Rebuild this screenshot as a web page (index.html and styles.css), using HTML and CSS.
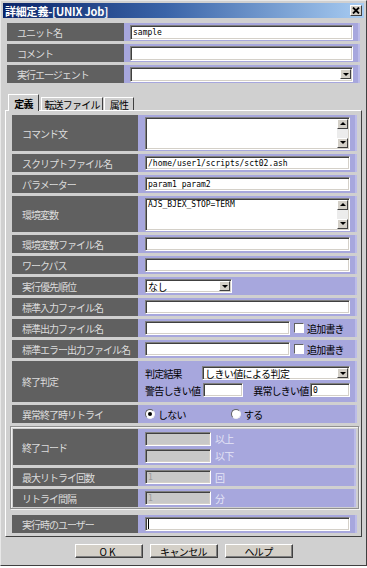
FILE: index.html
```html
<!DOCTYPE html>
<html lang="ja">
<head>
  <meta charset="UTF-8" />
  <title>詳細定義-[UNIX Job]</title>
  <link rel="stylesheet" href="styles.css">
</head>
<body>
  <div class="window">
    <div class="titlebar">
      <span class="title">詳細定義-[UNIX Job]</span>
      <span class="close">
        <svg width="8" height="7" viewBox="0 0 8 7"><path d="M1 0.5 L7 6.5 M7 0.5 L1 6.5" stroke="#000" stroke-width="1.8"/></svg>
      </span>
    </div>

    <div class="top">
      <div class="row">
        <div class="label">ユニット名</div>
        <div class="field"><div class="input"><span class="val">sample</span></div></div>
      </div>
      <div class="row">
        <div class="label">コメント</div>
        <div class="field"><div class="input"></div></div>
      </div>
      <div class="row">
        <div class="label">実行エージェント</div>
        <div class="field">
          <div class="select wide"><span class="sel-text"></span><span class="drop"><span class="tri"></span></span></div>
        </div>
      </div>
    </div>

    <div class="tabs">
      <div class="tab active">定義</div>
      <div class="tab t2">転送ファイル</div>
      <div class="tab t3">属性</div>
    </div>

    <div class="panel">
      <div class="row tall">
        <div class="label">コマンド文</div>
        <div class="field">
          <div class="textarea">
            <span class="ta-text"></span>
            <span class="vscroll">
              <span class="sbtn"><span class="tri up"></span></span>
              <span class="sbtn"><span class="tri"></span></span>
            </span>
          </div>
        </div>
      </div>
      <div class="row">
        <div class="label">スクリプトファイル名</div>
        <div class="field"><div class="input"><span class="val">/home/user1/scripts/sct02.ash</span></div></div>
      </div>
      <div class="row">
        <div class="label">パラメーター</div>
        <div class="field"><div class="input"><span class="val">param1 param2</span></div></div>
      </div>
      <div class="row tall">
        <div class="label">環境変数</div>
        <div class="field">
          <div class="textarea">
            <span class="ta-text val">AJS_BJEX_STOP=TERM</span>
            <span class="vscroll">
              <span class="sbtn"><span class="tri up"></span></span>
              <span class="sbtn"><span class="tri"></span></span>
            </span>
          </div>
        </div>
      </div>
      <div class="row">
        <div class="label">環境変数ファイル名</div>
        <div class="field"><div class="input"></div></div>
      </div>
      <div class="row">
        <div class="label">ワークパス</div>
        <div class="field"><div class="input"></div></div>
      </div>
      <div class="row">
        <div class="label">実行優先順位</div>
        <div class="field">
          <div class="select prio"><span class="sel-text">なし</span><span class="drop"><span class="tri"></span></span></div>
        </div>
      </div>
      <div class="row">
        <div class="label">標準入力ファイル名</div>
        <div class="field"><div class="input"></div></div>
      </div>
      <div class="row">
        <div class="label">標準出力ファイル名</div>
        <div class="field">
          <div class="input short"></div>
          <span class="check"></span><span class="text">追加書き</span>
        </div>
      </div>
      <div class="row">
        <div class="label">標準エラー出力ファイル名</div>
        <div class="field">
          <div class="input short"></div>
          <span class="check"></span><span class="text">追加書き</span>
        </div>
      </div>
      <div class="row judge">
        <div class="label">終了判定</div>
        <div class="field col">
          <div class="line">
            <span class="text">判定結果</span>
            <div class="select judge-sel"><span class="sel-text">しきい値による判定</span><span class="drop"><span class="tri"></span></span></div>
          </div>
          <div class="line">
            <span class="text">警告しきい値</span>
            <div class="input num warn"></div>
            <span class="text err-label">異常しきい値</span>
            <div class="input num err"><span class="val">0</span></div>
          </div>
        </div>
      </div>
      <div class="row">
        <div class="label">異常終了時リトライ</div>
        <div class="field">
          <span class="radio-item first"><span class="radio on"></span><span class="text">しない</span></span>
          <span class="radio-item"><span class="radio"></span><span class="text">する</span></span>
        </div>
      </div>

      <div class="group">
        <div class="row tall">
          <div class="label">終了コード</div>
          <div class="field col">
            <div class="line"><div class="input off"></div><span class="text dim">以上</span></div>
            <div class="line"><div class="input off"></div><span class="text dim">以下</span></div>
          </div>
        </div>
        <div class="row">
          <div class="label">最大リトライ回数</div>
          <div class="field"><div class="input off"><span class="val">1</span></div><span class="text dim">回</span></div>
        </div>
        <div class="row">
          <div class="label">リトライ間隔</div>
          <div class="field"><div class="input off"><span class="val">1</span></div><span class="text dim">分</span></div>
        </div>
      </div>

      <div class="row">
        <div class="label">実行時のユーザー</div>
        <div class="field"><div class="input"><span class="caret"></span></div></div>
      </div>
    </div>

    <div class="buttons">
      <div class="btn ok">OK</div>
      <div class="btn">キャンセル</div>
      <div class="btn">ヘルプ</div>
    </div>
  </div>
</body>
</html>
```

FILE: styles.css
```css
body {
  margin: 0;
  background: #ffffff;
  font-family: "Noto Sans CJK JP", "Liberation Sans", sans-serif;
  font-size: 10px;
}

.window {
  width: 367px;
  height: 566px;
  box-sizing: border-box;
  border: 1px solid;
  border-color: #e8e8e8 #404040 #404040 #e8e8e8;
  background: #d0d0d0;
  padding: 2px;
}

.titlebar {
  height: 15px;
  background: linear-gradient(to right, #0a2468, #3a64a8 45%, #a8ccf2);
  display: flex;
  align-items: center;
  justify-content: space-between;
  padding: 0 2px 0 2px;
}

.title {
  color: #ffffff;
  font-weight: bold;
  font-size: 11px;
  letter-spacing: -0.2px;
}

.close {
  width: 12px;
  height: 11px;
  box-sizing: border-box;
  background: #d4d0c8;
  border: 1px solid;
  border-color: #ffffff #404040 #404040 #ffffff;
  display: flex;
  align-items: center;
  justify-content: center;
}

/* rows */
.top {
  margin: 5px 4px 0;
  display: flex;
  flex-direction: column;
  gap: 3px;
}

.row {
  display: flex;
  height: 18px;
}

.row.tall {
  height: 36px;
}

.row.judge {
  height: 41px;
}

.label {
  background: #606060;
  color: #dcdcdc;
  display: flex;
  align-items: center;
  padding-left: 10px;
  box-sizing: border-box;
  letter-spacing: -1px;
  white-space: nowrap;
  flex-shrink: 0;
}

.top .label {
  width: 117px;
}

.panel .label {
  width: 126px;
}

.group .label {
  width: 125px;
  padding-left: 9px;
}

.field {
  flex: 1;
  background: #a7a7dd;
  border-right: 2px solid #bcbce8;
  display: flex;
  align-items: center;
  padding: 0 5px 0 6px;
  min-width: 0;
}

.panel .field {
  padding: 0 5px 0 7px;
}

.field.col {
  flex-direction: column;
  align-items: stretch;
  justify-content: center;
  gap: 3px;
}

.line {
  display: flex;
  align-items: center;
  height: 14px;
}

.text {
  color: #000000;
  letter-spacing: -0.8px;
  white-space: nowrap;
}

.text.dim {
  color: #e4e4f6;
  margin-left: 4px;
}

/* controls */
.input {
  flex: 1;
  height: 15px;
  box-sizing: border-box;
  background: #ffffff;
  border: 1px solid;
  border-color: #808080 #ffffff #ffffff #808080;
  box-shadow: inset 1px 1px #404040, inset -1px -1px #d4d0c8;
  display: flex;
  align-items: center;
  padding-left: 2px;
}

.panel .input {
  height: 14px;
}

.val {
  font-family: "DejaVu Sans Mono", monospace;
  font-size: 8px;
  color: #000000;
}

.input.short {
  flex: 0 0 145px;
}

.input.num {
  flex: 0 0 40px;
}

.input.warn {
  margin-left: 3px;
}

.err-label {
  margin-left: 10px;
}

.input.err {
  margin-left: auto;
}

.input.off {
  flex: 0 0 66px;
  background: #c8c8c8;
}

.input.off .val {
  color: #9a9a9a;
}

.caret {
  width: 1px;
  height: 10px;
  background: #000000;
}

.textarea {
  flex: 1;
  height: 33px;
  box-sizing: border-box;
  background: #ffffff;
  border: 1px solid;
  border-color: #808080 #ffffff #ffffff #808080;
  box-shadow: inset 1px 1px #404040, inset -1px -1px #d4d0c8;
  display: flex;
  padding: 1px 1px 1px 2px;
}

.ta-text {
  flex: 1;
  line-height: 10px;
}

.vscroll {
  width: 11px;
  display: flex;
  flex-direction: column;
  justify-content: space-between;
  background: #ececec;
}

.sbtn,
.drop {
  width: 11px;
  height: 10px;
  box-sizing: border-box;
  background: #d4d0c8;
  border: 1px solid;
  border-color: #ffffff #404040 #404040 #ffffff;
  display: flex;
  align-items: center;
  justify-content: center;
}

.tri {
  width: 0;
  height: 0;
  border-left: 3px solid transparent;
  border-right: 3px solid transparent;
  border-top: 3px solid #000000;
}

.tri.up {
  border-top: none;
  border-bottom: 3px solid #000000;
}

.select {
  height: 15px;
  box-sizing: border-box;
  background: #ffffff;
  border: 1px solid;
  border-color: #808080 #ffffff #ffffff #808080;
  box-shadow: inset 1px 1px #404040, inset -1px -1px #d4d0c8;
  display: flex;
  align-items: center;
  justify-content: space-between;
  padding: 1px 1px 1px 2px;
}

.select.wide {
  flex: 1;
}

.select.prio {
  width: 87px;
  height: 14px;
}

.select.judge-sel {
  width: 148px;
  height: 14px;
  margin-left: auto;
}

.sel-text {
  letter-spacing: -0.6px;
}

.check {
  width: 10px;
  height: 10px;
  box-sizing: border-box;
  background: #ffffff;
  border: 1px solid;
  border-color: #606060 #ffffff #ffffff #606060;
  margin: 0 3px 0 4px;
  flex-shrink: 0;
}

.radio-item {
  display: flex;
  align-items: center;
  gap: 3px;
}

.radio-item.first {
  width: 86px;
}

.radio {
  width: 10px;
  height: 10px;
  box-sizing: border-box;
  border-radius: 50%;
  background: #ffffff;
  border: 1px solid;
  border-color: #606060 #f0f0f0 #f0f0f0 #606060;
  display: flex;
  align-items: center;
  justify-content: center;
}

.radio.on::after {
  content: "";
  width: 4px;
  height: 4px;
  border-radius: 50%;
  background: #000000;
}

/* tabs */
.tabs {
  display: flex;
  align-items: flex-end;
  height: 16px;
  margin: 11px 2px 0 5px;
  gap: 1px;
}

.tab {
  height: 13px;
  box-sizing: border-box;
  border: 1px solid;
  border-bottom: none;
  border-color: #ffffff #404040 transparent #ffffff;
  background: #d0d0d0;
  display: flex;
  align-items: center;
  justify-content: center;
  letter-spacing: -0.8px;
}

.tab.active {
  width: 31px;
  height: 17px;
  font-weight: bold;
  position: relative;
  margin-bottom: -1px;
  margin-right: 1px;
  z-index: 1;
}

.tab.t2 {
  width: 62px;
}

.tab.t3 {
  width: 30px;
}

.panel {
  margin: 0 2px;
  border: 1px solid;
  border-color: #ffffff #404040 #404040 #ffffff;
  padding: 4px 4px 3px 6px;
  display: flex;
  flex-direction: column;
  gap: 3px;
}

.group {
  margin: 0 -2px 3px -2px;
  border: 1px solid #909090;
  box-shadow: inset 1px 1px #f2f2f2, 1px 1px #f2f2f2;
  padding: 2px 2px 1px 2px;
  display: flex;
  flex-direction: column;
  gap: 3px;
}

/* buttons */
.buttons {
  display: flex;
  justify-content: center;
  gap: 7px;
  margin-top: 7px;
}

.btn {
  width: 68px;
  height: 14px;
  box-sizing: border-box;
  background: #d4d0c8;
  border: 1px solid;
  border-color: #ffffff #404040 #404040 #ffffff;
  box-shadow: inset -1px -1px #808080;
  display: flex;
  align-items: center;
  justify-content: center;
  letter-spacing: -0.6px;
}

.btn.ok {
  letter-spacing: 2px;
}
```
